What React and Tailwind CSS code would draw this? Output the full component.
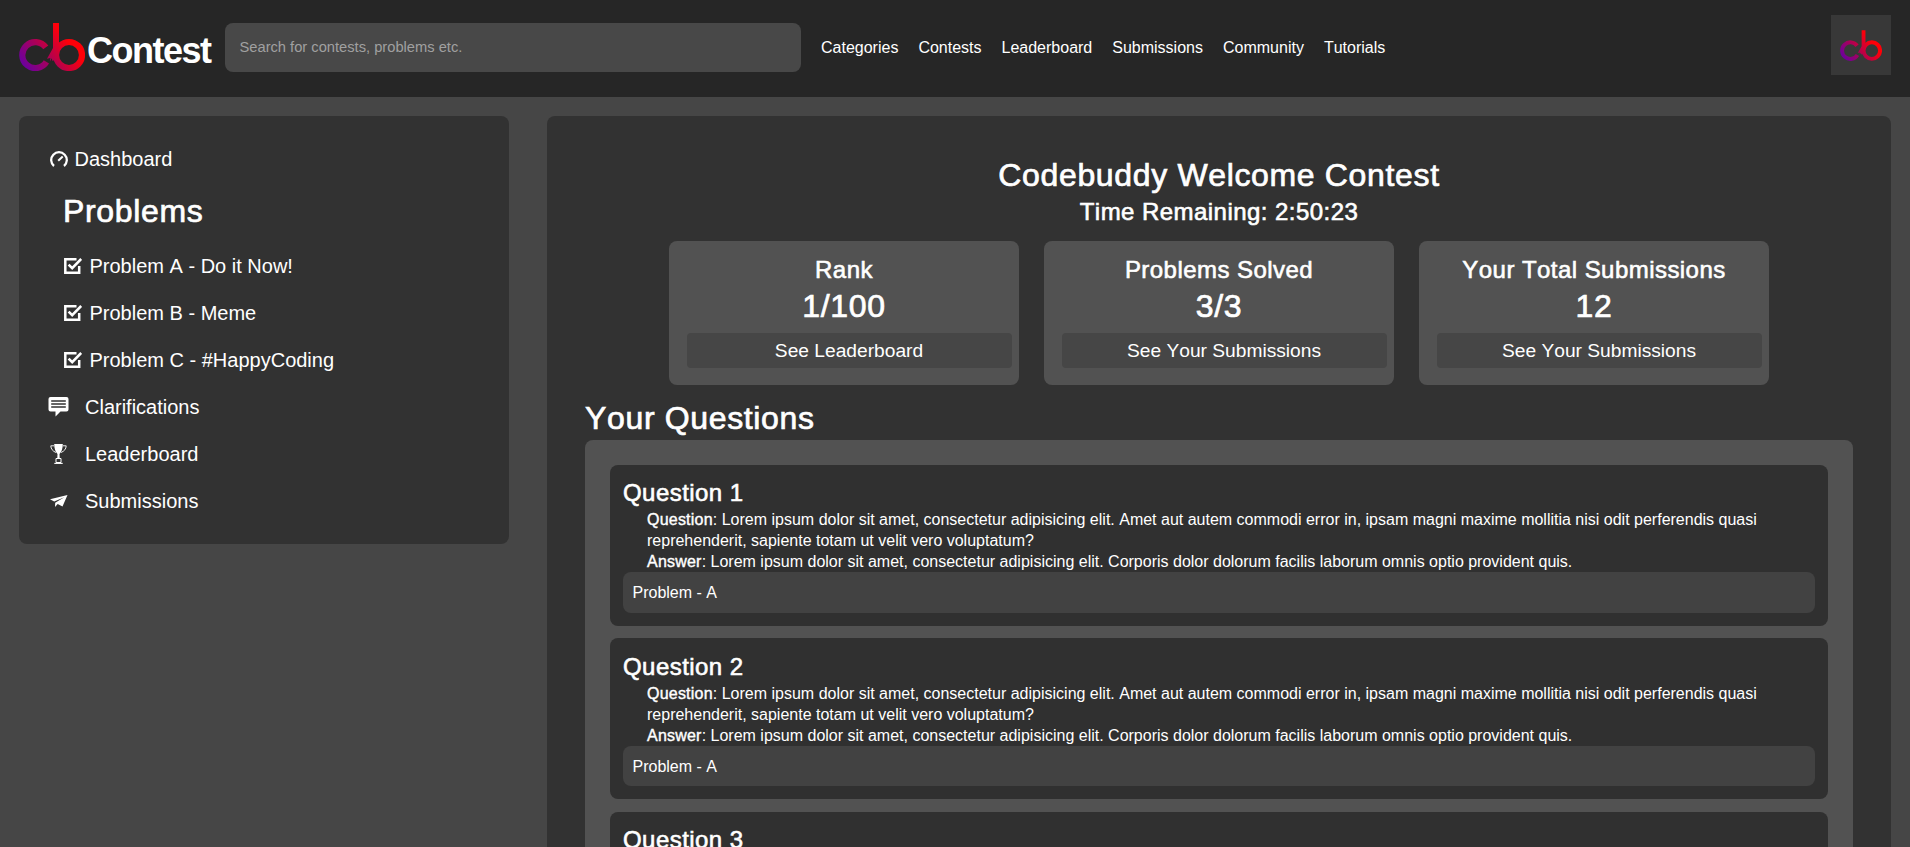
import React from "react";

function Logo({ id, className }) {
  return (
    <svg viewBox="0 0 66 48" className={className} fill="none">
      <defs>
        <linearGradient id={id} gradientUnits="userSpaceOnUse" x1="6" y1="44" x2="46" y2="14">
          <stop offset="0" stopColor="#6c009c" />
          <stop offset="0.5" stopColor="#b00052" />
          <stop offset="1" stopColor="#ff0008" />
        </linearGradient>
      </defs>
      <path d="M26.800 24.400A13 13 0 1 0 27.400 38.800" stroke={`url(#${id})`} strokeWidth="6.200" />
      <circle cx="50" cy="32" r="13" stroke={`url(#${id})`} strokeWidth="6.200" />
      <path d="M34 0h6v27l-3 9-3.500 2-.800-2.800-1.700 3.400.3-3.600-3.300.8L34 25z" fill={`url(#${id})`} />
    </svg>
  );
}

function Gauge() {
  return (
    <svg viewBox="0 0 18 16" className="h-4 w-[18px]" fill="none" stroke="white">
      <path d="M4 15A7.800 7.800 0 1 1 14 15" strokeWidth="2.300" />
      <path d="M8.200 9.800L12.700 5.500" strokeWidth="2" />
    </svg>
  );
}

function CheckBox() {
  return (
    <svg viewBox="0 0 18 16" className="h-4 w-[18px]" fill="none" stroke="white">
      <path d="M12.500 1.200H1.300V14.700H15.200V8" strokeWidth="2.500" />
      <path d="M4.600 6.600L8.200 10.200L17.200 1" strokeWidth="2.600" />
    </svg>
  );
}

function Comment() {
  return (
    <svg viewBox="0 0 21 20" className="h-5 w-[21px]">
      <path d="M2.500 0h16q2 0 2 2v10.500q0 2-2 2h-6L7.500 19.500v-5h-5q-2 0-2-2V2q0-2 2-2z" fill="white" />
      <path d="M3.200 4h14.600M3.200 7h14.600M3.200 10h14.600" stroke="#323232" strokeWidth="1.400" />
    </svg>
  );
}

function Trophy() {
  return (
    <svg viewBox="0 0 17 20" className="h-5 w-[17px]" fill="none" stroke="white">
      <path d="M4.200 0h8.600q0 6.500-3.300 10l.2 4H7.300l.2-4Q4.200 6.500 4.200 0z" fill="white" stroke="none" />
      <path d="M4 1.800H.8Q1 6.500 6 8.500M13 1.800h3.200Q16 6.500 11 8.500" strokeWidth="0.900" />
      <path d="M6 14.500h5v4H6z" strokeWidth="1" />
      <path d="M4.300 19.400h8.400" strokeWidth="1.100" />
    </svg>
  );
}

function Plane() {
  return (
    <svg viewBox="0 0 18 12" className="h-3 w-[18px]">
      <path d="M17.500 0L0 4.300L4.200 6.600L14.300 2.300L5.200 7.700L5 12L7.700 9L12.500 11.600z" fill="white" />
    </svg>
  );
}

const heading = "font-normal [-webkit-text-stroke:0.7px_white] tracking-[0.65px] text-[32px]";
const subheading = "font-normal [-webkit-text-stroke:0.6px_white] tracking-[0.45px] text-[24px]";
const strong = "font-normal [-webkit-text-stroke:0.4px_white] tracking-[0.22px]";

const links = ["Categories", "Contests", "Leaderboard", "Submissions", "Community", "Tutorials"];
const problems = ["Problem A - Do it Now!", "Problem B - Meme", "Problem C - #HappyCoding"];
const pages = [
  { label: "Clarifications", Icon: Comment },
  { label: "Leaderboard", Icon: Trophy },
  { label: "Submissions", Icon: Plane },
];
const stats = [
  { title: "Rank", value: "1/100", action: "See Leaderboard" },
  { title: "Problems Solved", value: "3/3", action: "See Your Submissions" },
  { title: "Your Total Submissions", value: "12", action: "See Your Submissions" },
];

function Header() {
  return (
    <header className="flex h-[97px] items-start bg-[#262626] pl-[19px] pr-[19px]">
      <div className="flex w-[206px] pt-[23px]">
        <Logo id="brand" className="h-12 w-[66px]" />
        <span className="ml-[2px] pt-[8px] text-[36px] font-bold leading-[40px] tracking-[-1.5px]">Contest</span>
      </div>
      <div className="mt-[23px] flex h-[49px] w-[576px] items-center rounded-lg bg-[#484848] pl-[14.5px]">
        <input
          className="w-full bg-transparent text-[14.7px] text-white outline-none placeholder:text-[#a0a0a0]"
          placeholder="Search for contests, problems etc."
        />
      </div>
      <nav className="ml-5 mt-[23px] flex h-[49px] items-center gap-5 text-base">
        {links.map((l) => (
          <a key={l}>{l}</a>
        ))}
      </nav>
      <div className="ml-auto mt-[15px] flex size-[60px] items-center justify-center bg-[#383838]">
        <Logo id="avatar" className="h-[31px] w-[42px]" />
      </div>
    </header>
  );
}

function Sidebar() {
  return (
    <aside className="h-[428px] w-[490px] shrink-0 rounded-lg bg-[#323232] pt-[19px] text-xl">
      <div className="flex h-[47px] items-center pl-[31px]">
        <Gauge />
        <span className="ml-[6.5px]">Dashboard</span>
      </div>
      <h2 className={`flex h-[60px] items-center pb-px pl-[44px] ${heading}`}>Problems</h2>
      {problems.map((p) => (
        <div key={p} className="flex h-[47px] items-center pl-[45px]">
          <CheckBox />
          <span className="ml-[7.5px]">{p}</span>
        </div>
      ))}
      {pages.map(({ label, Icon }) => (
        <div key={label} className="flex h-[47px] items-center pl-[29px]">
          <span className="flex w-[21px] justify-center">
            <Icon />
          </span>
          <span className="ml-4">{label}</span>
        </div>
      ))}
    </aside>
  );
}

function Stat({ title, value, action }) {
  return (
    <div className="flex h-36 w-[350px] flex-col rounded-lg bg-[#525252] pt-[14px] text-center">
      <h3 className={`leading-[30px] ${subheading}`}>{title}</h3>
      <p className={`mt-[3px] leading-[36px] ${heading}`}>{value}</p>
      <button className="ml-[17.5px] mt-[9px] h-[35px] w-[325px] rounded bg-[#464646] text-[19.2px] leading-[35px]">{action}</button>
    </div>
  );
}

function Question({ number }) {
  return (
    <article className="h-[161px] shrink-0 rounded-lg bg-[#303030] px-[13px] pt-[13.2px]">
      <h3 className={`h-[31px] leading-[30px] ${subheading}`}>Question {number}</h3>
      <div className="pl-6 pr-6 text-base leading-[21px]">
        <p>
          <b className={strong}>Question</b>: Lorem ipsum dolor sit amet, consectetur adipisicing elit. Amet aut autem
          commodi error in, ipsam magni maxime mollitia nisi odit perferendis quasi reprehenderit, sapiente totam ut velit
          vero voluptatum?
        </p>
        <p>
          <b className={strong}>Answer</b>: Lorem ipsum dolor sit amet, consectetur adipisicing elit. Corporis dolor
          dolorum facilis laborum omnis optio provident quis.
        </p>
      </div>
      <div className="h-[40.6px] rounded-lg bg-[#424242] pl-[9.5px] text-base leading-[41px]">Problem - A</div>
    </article>
  );
}

export default function App() {
  return (
    <div className="h-screen overflow-hidden bg-[#464646] font-['Liberation_Sans',Arial,sans-serif] text-white [font-kerning:none]">
      <Header />
      <div className="flex items-start gap-[38px] px-[19px] pt-[19px]">
        <Sidebar />
        <main className="h-[1000px] flex-1 rounded-lg bg-[#323232] px-[38px] pt-[38px]">
          <h1 className={`text-center leading-[42px] ${heading}`}>Codebuddy Welcome Contest</h1>
          <h2 className={`text-center leading-[32px] ${subheading}`}>Time Remaining: 2:50:23</h2>
          <div className="mt-[13px] flex justify-center gap-[25px]">
            {stats.map((s) => (
              <Stat key={s.title} {...s} />
            ))}
          </div>
          <h2 className={`mt-[13px] h-[42px] leading-[40px] ${heading}`}>Your Questions</h2>
          <section className="flex h-[600px] flex-col gap-[12.4px] rounded-lg bg-[#525252] p-[25px]">
            {[1, 2, 3].map((n) => (
              <Question key={n} number={n} />
            ))}
          </section>
        </main>
      </div>
    </div>
  );
}
